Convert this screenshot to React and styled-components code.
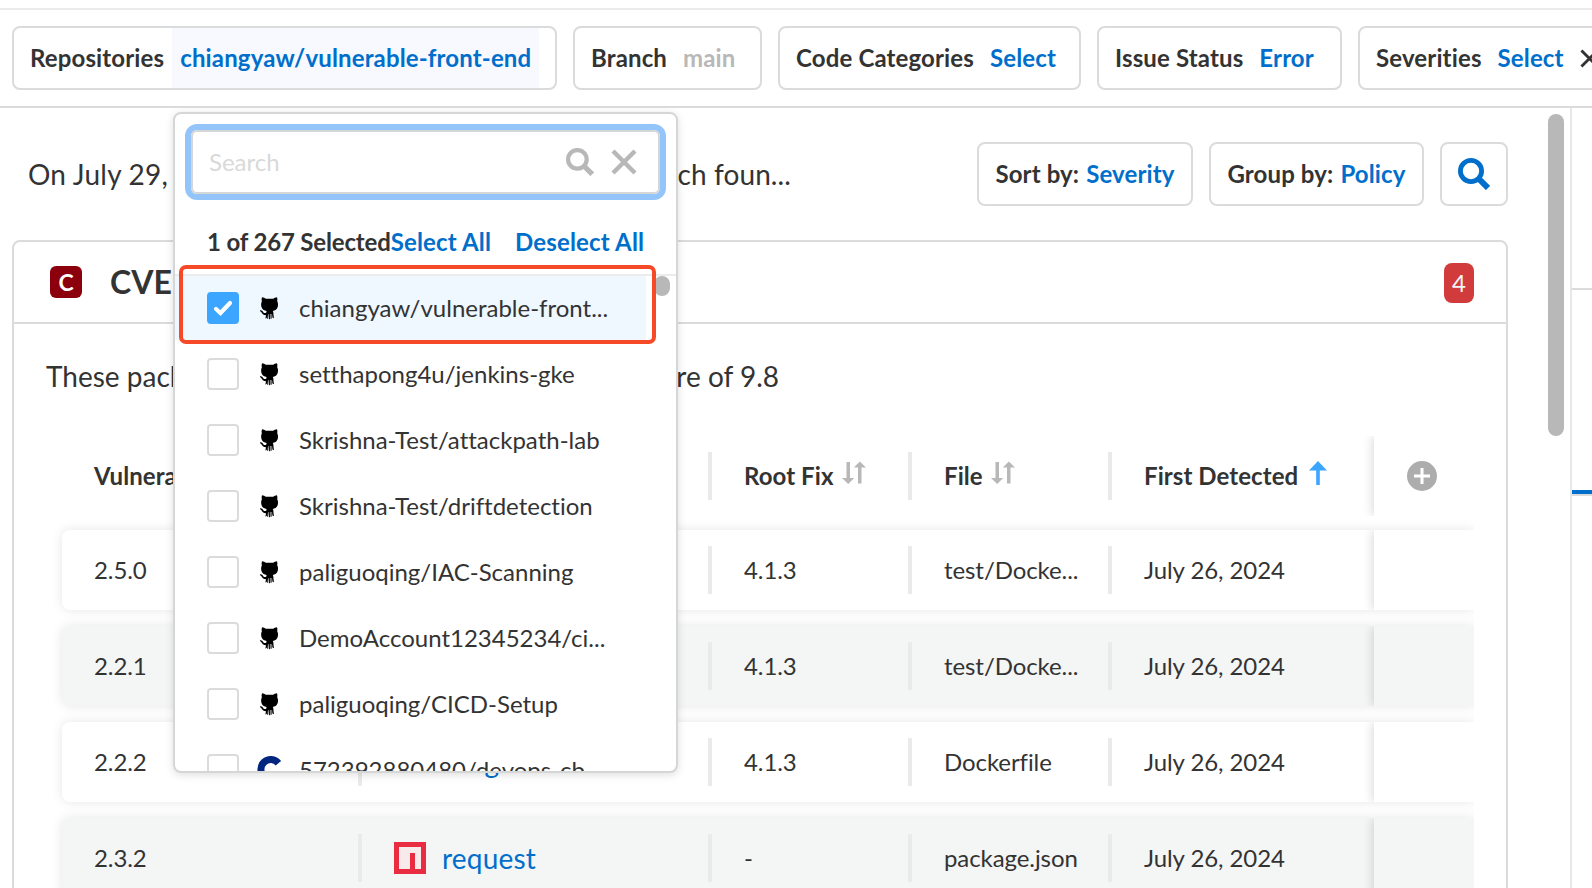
import React from 'react';
import styled, { createGlobalStyle, css } from 'styled-components';

const Global = createGlobalStyle`
  * { box-sizing: border-box; }
  body { margin: 0; background: #fff; color: #333; font-family: Lato, "Liberation Sans", sans-serif; font-size: 24px; line-height: 32px; }
`;

const Page = styled.div`
  position: relative;
  width: 1592px;
  height: 888px;
  overflow: hidden;
  display: flex;
  flex-direction: column;
`;

const FilterBar = styled.header`
  flex: none;
  height: 100px;
  margin-top: 8px;
  padding: 16px 0 0 12px;
  border-top: 2px solid #ebebeb;
  border-bottom: 2px solid #dadbdb;
  display: flex;
  gap: 16px;
`;

const Filter = styled.div`
  flex: none;
  width: ${(p) => p.$width}px;
  height: 64px;
  padding-left: 16px;
  border: 2px solid #dadbdb;
  border-radius: 8px;
  display: flex;
  align-items: center;
  font-weight: 700;
  letter-spacing: 0.14px;
  white-space: nowrap;
  svg { margin-left: 8px; flex: none; }
`;

const FilterValue = styled.span`
  height: 60px;
  line-height: 60px;
  margin-left: 8px;
  padding: 0 8px;
  color: ${(p) => (p.$muted ? '#b8b8b8' : '#006fcc')};
  background: ${(p) => (p.$open ? '#f7f9fe' : 'transparent')};
`;

const Body = styled.div`
  flex: 1;
  display: flex;
  min-height: 0;
`;

const Main = styled.main`
  width: 1570px;
  flex: none;
  display: flex;
  justify-content: space-between;
  padding-left: 12px;
`;

const Content = styled.div`
  width: 1496px;
`;

const ScrollTrack = styled.div`
  width: 22px;
  padding-top: 6px;
`;

const ScrollThumb = styled.div`
  width: 16px;
  height: 322px;
  border-radius: 8px;
  background: #b8b8b8;
`;

const SidePanel = styled.aside`
  flex: 1;
  border-left: 2px solid #e6e7e7;
  display: flex;
  flex-direction: column;
`;

const SideTop = styled.div`
  height: 182px;
  border-bottom: 2px solid #dadbdb;
`;

const SideTabs = styled.div`
  height: 206px;
  border-bottom: 2px solid #dadbdb;
  display: flex;
  align-items: flex-end;
  &::after { content: ''; flex: 1; height: 4px; background: #006fcc; }
`;

const Toolbar = styled.div`
  display: flex;
  gap: 16px;
  height: 132px;
  padding-top: 34px;
`;

const Summary = styled.div`
  display: flex;
  justify-content: space-between;
  width: 763px;
  margin: 0 170px 0 16px;
  font-size: 28px;
  line-height: 64px;
  letter-spacing: 0.1px;
  white-space: nowrap;
`;

const ScanDate = styled.span`
  letter-spacing: 0.24px;
`;

const ToolButton = styled.div`
  flex: none;
  width: ${(p) => p.$width}px;
  height: 64px;
  border: 2px solid #dadbdb;
  border-radius: 8px;
  display: flex;
  align-items: center;
  justify-content: center;
  gap: 7px;
  font-weight: 700;
  letter-spacing: 0.13px;
  white-space: nowrap;
`;

const Blue = styled.span`color: #006fcc;`;

const Card = styled.section`
  height: 700px;
  border: 2px solid #dadbdb;
  border-radius: 8px;
`;

const CardHeader = styled.div`
  height: 82px;
  padding: 0 32px 0 36px;
  border-bottom: 2px solid #dadbdb;
  display: flex;
  align-items: center;
`;

const Critical = styled.span`
  width: 32px;
  height: 32px;
  border-radius: 6px;
  background: #8b000c;
  color: #fff;
  font-size: 23px;
  font-weight: 700;
  text-align: center;
`;

const Title = styled.h2`
  flex: 1;
  margin: 0 0 0 28px;
  font-size: 32px;
  line-height: 40px;
`;

const Count = styled.span`
  width: 30px;
  height: 40px;
  margin-top: 2px;
  line-height: 40px;
  border-radius: 8px;
  background: #d13b3b;
  color: #f4f5f5;
  text-align: center;
`;

const Description = styled.div`
  display: flex;
  justify-content: space-between;
  width: 733px;
  height: 112px;
  padding-top: 32px;
  margin-left: 32px;
  font-size: 28px;
  line-height: 40px;
  white-space: nowrap;
`;

const Table = styled.div`
  width: 1428px;
  height: 460px;
  margin-left: 32px;
  padding-left: 16px;
  overflow: hidden;
`;

const columns = css`
  display: grid;
  grid-template-columns: 296px 350px 200px 200px 266px 100px;
  align-items: center;
  height: 80px;
`;

const HeadRow = styled.div`
  ${columns}
  margin-bottom: 14px;
  font-weight: 700;
  letter-spacing: 0.08px;
`;

const Row = styled.div`
  ${columns}
  margin-bottom: 16px;
  border-radius: 8px 0 0 8px;
  letter-spacing: -0.08px;
  background: ${(p) => (p.$shaded ? '#f4f5f5' : '#fff')};
  box-shadow: 0 0 12px rgba(0, 0, 0, 0.1);
`;

const Cell = styled.div`
  display: flex;
  align-items: center;
  height: 48px;
  padding-left: 32px;
  white-space: nowrap;
  border-left: ${(p) => (p.$first ? '0' : '4px solid #e9ebeb')};
  svg { flex: none; }
`;

const Pinned = styled.div`
  height: 80px;
  display: flex;
  align-items: center;
  justify-content: center;
  padding-right: 4px;
  background: inherit;
  box-shadow: -1px 0 10px rgba(0, 0, 0, 0.16);
  clip-path: inset(0 0 0 -12px);
`;

const PackageLink = styled.span`
  margin-left: ${(p) => (p.$bare ? 49 : 16)}px;
  font-size: 28px;
  letter-spacing: 0.2px;
  color: #006fcc;
`;

const Dropdown = styled.div`
  position: absolute;
  left: 173px;
  top: 112px;
  width: 505px;
  height: 661px;
  padding-top: 16px;
  background: #fff;
  border: 2px solid #d5d7d7;
  border-radius: 8px;
  box-shadow: 0 2px 8px rgba(0, 0, 0, 0.13);
`;

const SearchBox = styled.div`
  width: 469px;
  height: 64px;
  margin-left: 16px;
  padding: 0 21px 0 16px;
  border: 2px solid #d5d7d7;
  border-radius: 6px;
  box-shadow: 0 0 0 6px #94c5fa;
  display: flex;
  align-items: center;
  gap: 17px;
  color: #d8d9d9;
`;

const SearchText = styled.span`flex: 1;`;

const SelectBar = styled.div`
  display: flex;
  height: 82px;
  padding: 32px 0 0 32px;
  border-bottom: 2px solid #ebebeb;
  font-weight: 700;
  white-space: nowrap;
`;

const Selected = styled.span`
  letter-spacing: -0.16px;
`;

const Action = styled.span`
  color: #006fcc;
  margin-right: 24px;
  letter-spacing: 0.16px;
`;

const OptionArea = styled.div`
  display: flex;
  justify-content: space-between;
  height: 495px;
  padding-right: 6px;
  overflow: hidden;
  border-radius: 0 0 6px 6px;
`;

const Options = styled.div`width: 471px;`;

const OptionThumb = styled.div`
  width: 16px;
  height: 20px;
  border-radius: 8px;
  background: #b8b8b8;
`;

const Option = styled.div`
  display: flex;
  align-items: center;
  height: ${(p) => (p.$checked ? 64 : 66)}px;
  margin-bottom: ${(p) => (p.$checked ? 1 : 0)}px;
  padding-left: 32px;
  background: ${(p) => (p.$checked ? '#eff7ff' : 'transparent')};
  font-variant-ligatures: none;
  white-space: nowrap;
`;

const Checkbox = styled.span`
  width: 32px;
  height: 32px;
  border-radius: 4px;
  border: 2px solid ${(p) => (p.$checked ? '#3ba5ff' : '#dadbdb')};
  background: ${(p) => (p.$checked ? '#3ba5ff' : 'transparent')};
  display: flex;
  align-items: center;
  justify-content: center;
`;

const Provider = styled.span`
  width: 24px;
  height: 24px;
  margin: 0 17px 0 19px;
  display: flex;
`;

const Callout = styled.div`
  position: absolute;
  left: 179px;
  top: 265px;
  width: 477px;
  height: 79px;
  border: 4px solid #f54927;
  border-radius: 7px;
`;

const Magnifier = ({ size, color }) => (
  <svg width={size} height={size} viewBox="0 0 32 32" fill="none" stroke={color}>
    <circle cx="13" cy="13" r="10.6" strokeWidth="4.8" />
    <path d="M20 20 L30 30" strokeWidth="6" />
  </svg>
);

const Close = ({ size, color, width }) => (
  <svg width={size} height={size} viewBox="0 0 26 26" stroke={color} strokeWidth={width}>
    <path d="M2 2 L24 24 M24 2 L2 24" />
  </svg>
);

const Octocat = () => (
  <svg width="24" height="24" viewBox="0 0 24 24">
    <path fill="#000" d="M4 1.2 C5.6 1.3 6.8 2 7.8 2.8 H15.2 C16.2 2 17.4 1.3 19 1.2 C19.6 2.8 19.4 4.2 19.2 5.2 C20.3 7 20.3 9.6 19.4 11.8 C18.6 13.7 16.8 14.6 14.8 15 C15.4 16 15.5 17 15.5 19 L16 22.3 L14.4 21.6 L14 18 H13.6 V22.8 H12.5 V18 H12 V23.2 H11.1 V18 H10.6 L10.2 22.8 H9.2 L9.3 18.6 L8.8 22 L7.4 22.6 L8 19.2 C5.4 19.2 4.6 18.4 3.8 16.8 C3.3 15.8 2.4 15.4 1.8 14.4 C3.8 14 4.6 15.2 5.3 16.2 C6 17.1 7 17.2 8.2 16.8 L8.6 15 C6.4 14.6 4.6 13.7 3.8 11.8 C2.9 9.6 2.9 7 3.9 5.2 C3.6 4.2 3.5 2.8 4 1.2Z" />
  </svg>
);

const Ring = () => (
  <svg width="24" height="24" viewBox="0 0 24 24" fill="none" overflow="visible">
    <path d="M20.4 5.2 A9.8 9.8 0 1 0 20.4 17.4" stroke="#00267f" strokeWidth="7" />
  </svg>
);

const Npm = () => (
  <svg width="32" height="32" viewBox="0 0 32 32">
    <path fill="#e92c42" d="M0 0H32V32H0Z" />
    <path fill="#f8e9ea" d="M5 5H27V27H21V11H16V27H5Z" />
  </svg>
);

const SortIcon = styled.svg`
  margin: 0 0 6px ${(p) => p.$gap}px;
`;

const SortBoth = () => (
  <SortIcon $gap={8} width="24" height="24" viewBox="0 0 24 24" fill="#b8b8b8">
    <path d="M4.5 1H8V17H12.2L6.2 23L0 17H4.5Z" />
    <path d="M16 22.5H19.5V6.5H24L17.8 0.5L11.8 6.5H16Z" />
  </SortIcon>
);

const SortUp = () => (
  <SortIcon $gap={11} width="18" height="24" viewBox="0 0 18 24" fill="#3ba5ff">
    <path d="M9 0L18 9.5H10.8V24H7.2V9.5H0Z" />
  </SortIcon>
);

const filters = [
  { label: 'Repositories', value: 'chiangyaw/vulnerable-front-end', width: 545, open: true },
  { label: 'Branch', value: 'main', width: 189, muted: true },
  { label: 'Code Categories', value: 'Select', width: 303 },
  { label: 'Issue Status', value: 'Error', width: 245 },
  { label: 'Severities', value: 'Select', width: 300, close: true },
];

const repos = [
  'chiangyaw/vulnerable-front...',
  'setthapong4u/jenkins-gke',
  'Skrishna-Test/attackpath-lab',
  'Skrishna-Test/driftdetection',
  'paliguoqing/IAC-Scanning',
  'DemoAccount12345234/ci...',
  'paliguoqing/CICD-Setup',
  '572392880480/devops-cb-...',
];

const rows = [
  { version: '2.5.0', fix: '4.1.3', file: 'test/Docke...' },
  { version: '2.2.1', fix: '4.1.3', file: 'test/Docke...' },
  { version: '2.2.2', pkg: 'swig', fix: '4.1.3', file: 'Dockerfile' },
  { version: '2.3.2', pkg: 'request', npm: true, fix: '-', file: 'package.json' },
];

export default function App() {
  return (
    <Page>
      <Global />
      <FilterBar>
        {filters.map((f) => (
          <Filter key={f.label} $width={f.width}>
            {f.label}
            <FilterValue $muted={f.muted} $open={f.open}>{f.value}</FilterValue>
            {f.close && <Close size={19} color="#333" width={4} />}
          </Filter>
        ))}
      </FilterBar>
      <Body>
        <Main>
          <Content>
            <Toolbar>
              <Summary><ScanDate>On July 29, 2024</ScanDate><span>branch foun...</span></Summary>
              <ToolButton $width={216}>Sort by: <Blue>Severity</Blue></ToolButton>
              <ToolButton $width={215}>Group by: <Blue>Policy</Blue></ToolButton>
              <ToolButton $width={68}><Magnifier size={32} color="#006fcc" /></ToolButton>
            </Toolbar>
            <Card>
              <CardHeader>
                <Critical>C</Critical>
                <Title>CVE</Title>
                <Count>4</Count>
              </CardHeader>
              <Description><span>These packages</span><span>score of 9.8</span></Description>
              <Table>
                <HeadRow>
                  <Cell $first>Vulnerable</Cell>
                  <Cell>Package</Cell>
                  <Cell>Root Fix<SortBoth /></Cell>
                  <Cell>File<SortBoth /></Cell>
                  <Cell>First Detected<SortUp /></Cell>
                  <Pinned>
                    <svg width="30" height="30" viewBox="0 0 30 30">
                      <circle cx="15" cy="15" r="15" fill="#adadad" />
                      <path d="M15 7V23M7 15H23" stroke="#fff" strokeWidth="3" />
                    </svg>
                  </Pinned>
                </HeadRow>
                {rows.map((r, i) => (
                  <Row key={r.version} $shaded={i % 2 === 1}>
                    <Cell $first>{r.version}</Cell>
                    <Cell>
                      {r.npm && <Npm />}
                      {r.pkg && <PackageLink $bare={!r.npm}>{r.pkg}</PackageLink>}
                    </Cell>
                    <Cell>{r.fix}</Cell>
                    <Cell>{r.file}</Cell>
                    <Cell>July 26, 2024</Cell>
                    <Pinned />
                  </Row>
                ))}
              </Table>
            </Card>
          </Content>
          <ScrollTrack><ScrollThumb /></ScrollTrack>
        </Main>
        <SidePanel><SideTop /><SideTabs /></SidePanel>
      </Body>
      <Dropdown>
        <SearchBox>
          <SearchText>Search</SearchText>
          <Magnifier size={28} color="#b8b8b8" />
          <Close size={26} color="#b8b8b8" width={4.5} />
        </SearchBox>
        <SelectBar>
          <Selected>1 of 267 Selected</Selected>
          <Action>Select All</Action>
          <Action>Deselect All</Action>
        </SelectBar>
        <OptionArea>
          <Options>
            {repos.map((name, i) => (
              <Option key={name} $checked={i === 0}>
                <Checkbox $checked={i === 0}>
                  {i === 0 && (
                    <svg width="20" height="16" viewBox="0 0 20 16" fill="none" stroke="#fff" strokeWidth="4.2">
                      <path d="M3 9L7.5 13L17 3" strokeLinecap="round" />
                    </svg>
                  )}
                </Checkbox>
                <Provider>{i === 7 ? <Ring /> : <Octocat />}</Provider>
                {name}
              </Option>
            ))}
          </Options>
          <OptionThumb />
        </OptionArea>
      </Dropdown>
      <Callout />
    </Page>
  );
}
